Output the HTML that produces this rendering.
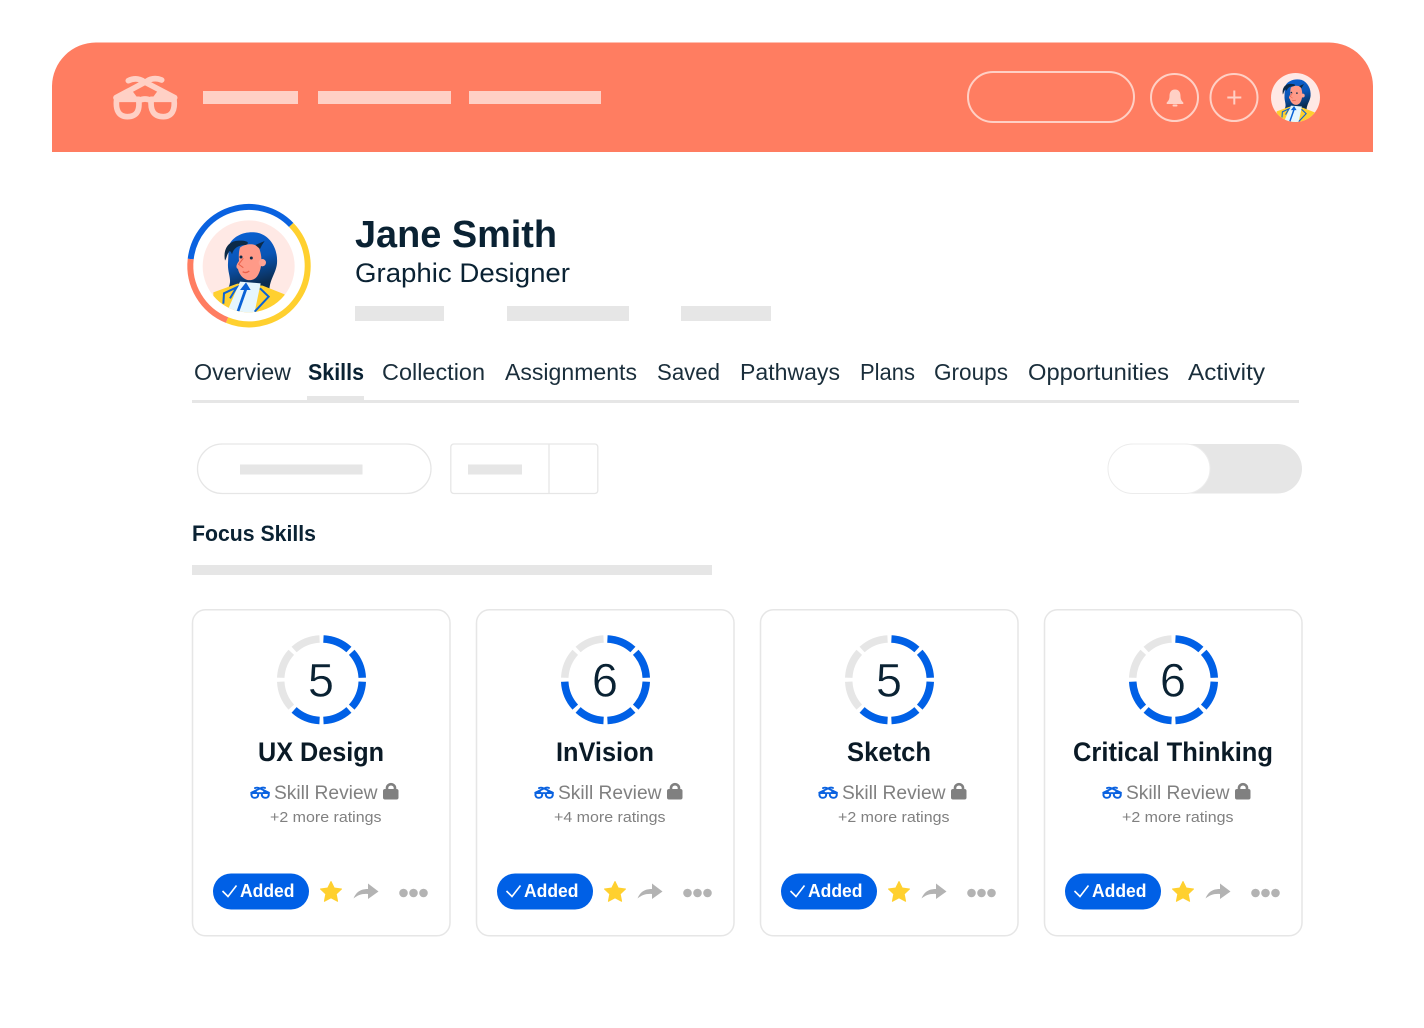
<!DOCTYPE html>
<html><head><meta charset="utf-8"><title>Profile</title>
<style>html,body{margin:0;padding:0;background:#fff}svg{display:block}text{font-family:"Liberation Sans",sans-serif}</style></head>
<body>
<svg width="1424" height="1028" viewBox="0 0 1424 1028" xmlns="http://www.w3.org/2000/svg">
<defs>
<linearGradient id="hg" x1="0" y1="0" x2="0.25" y2="1"><stop offset="0" stop-color="#0a62d6"/><stop offset=".55" stop-color="#0a55b5"/><stop offset="1" stop-color="#0b2c50"/></linearGradient>
<clipPath id="cc"><circle cx="206" cy="214" r="138"/></clipPath>
<g id="person">
<circle cx="206" cy="214" r="138" fill="#ffe9e5"/>
<g clip-path="url(#cc)">
<path d="M150 145C165 118 205 105 240 115C275 128 294 165 291 205C288 235 270 250 268 285L145 278C158 255 142 235 144 205C145 185 145 165 150 145Z" fill="url(#hg)"/>
<path d="M100 292L172 266L248 272L314 298L310 360L100 360Z" fill="#ffd02f"/>
<path d="M180 260L242 265L222 360L142 348Z" fill="#e6f6fd"/>
<path d="M198 262L180 285L192 285L170 348L178 350L201 285L212 285Z" fill="#0a62d6"/>
<path d="M130 326L132 295L170 277L150 310" fill="none" stroke="#0a62d6" stroke-width="6"/>
<path d="M224 350L266 305L240 280" fill="none" stroke="#0a62d6" stroke-width="6"/>
<path d="M180 158C195 146 222 144 236 156C242 170 245 185 244 200C244 215 240 230 234 240C226 256 205 260 192 250C182 244 176 232 174 222C166 218 169 208 177 198C176 184 176 170 180 158Z" fill="#ff9a88"/>
<circle cx="247" cy="203" r="11" fill="#ffa494"/>
<path d="M135 197C128 160 148 135 180 137C205 137 210 145 196 150C175 150 160 160 156 178C154 170 148 165 146 172C140 180 140 190 135 197Z" fill="#0c2a47"/>
<path d="M226 150L254 138L246 150L240 162Z" fill="#0c2a47"/>
<circle cx="183" cy="186" r="4.500" fill="#0c2a47"/><circle cx="214" cy="189" r="4.500" fill="#0c2a47"/>
<path d="M190 190L176 208L190 218" fill="none" stroke="#e8604a" stroke-width="3"/>
<path d="M188 230Q198 236 208 228" fill="none" stroke="#e8604a" stroke-width="4"/>
</g>
</g>
<g id="glasses" fill="none" stroke-linecap="round" stroke-linejoin="round">
<path d="M80 118H146C150 150 142 170 112 170C86 170 76 150 80 118Z"/>
<path d="M184 118H252C256 150 246 170 220 170C190 170 180 150 184 118Z"/>
<path d="M146 122Q165 112 184 122"/>
<path d="M78 113L168 65Q190 50 215 60"/>
<path d="M254 113L162 65Q140 50 115 62"/>
<path d="M78 113L125 90L146 118ZM254 113L205 90L184 118Z" fill="currentColor" stroke="none"/>
</g>
<g id="foot">
<rect x="192.500" y="609.800" width="257.500" height="326" rx="13" fill="#fff" stroke="#e6e6e6" stroke-width="1.500"/>
<circle cx="321.500" cy="679.700" r="40.800" fill="none" stroke="#e6e6e6" stroke-width="7.500" pathLength="360" stroke-dasharray="39.400 5.600" stroke-dashoffset="-2.800" transform="rotate(-90 321.500 679.700)"/>
<text x="274" y="799" font-size="19" fill="#808080" textLength="103.500" lengthAdjust="spacingAndGlyphs">Skill Review</text>
<use href="#glasses" transform="translate(243.500 782.500) scale(.1 .09)" stroke="#0a62e0" color="#0a62e0" stroke-width="20"/>
<path d="M387 790V788A4 3.800 0 0 1 395 788V790" fill="none" stroke="#808080" stroke-width="2.600"/>
<rect x="383" y="789" width="15.500" height="10.500" rx="2" fill="#808080"/>
<rect x="213" y="873.500" width="96" height="36" rx="18" fill="#0060e6"/>
<path d="M222.500 891L228 896.500L236.500 885.500" fill="none" stroke="#fff" stroke-width="1.600"/>
<text x="240" y="897" font-size="18" font-weight="700" fill="#fff" textLength="54.500" lengthAdjust="spacingAndGlyphs">Added</text>
<path d="M331 881.500L334.200 888L341.500 889L336.200 894L337.600 901.300L331 897.800L324.400 901.300L325.800 894L320.500 889L327.800 888Z" fill="#ffd02f" stroke="#ffd02f" stroke-linejoin="round"/>
<path d="M353.500 898.500C357 890 363 889 368 889V883.500L378.500 891.500L368 899V894C362 893.500 358 895 353.500 898.500Z" fill="#b3b3b3"/>
<circle cx="403.500" cy="893" r="4.300" fill="#b3b3b3"/><circle cx="413.500" cy="893" r="4.300" fill="#b3b3b3"/><circle cx="423.500" cy="893" r="4.300" fill="#b3b3b3"/>
</g>
</defs>

<path d="M52 152V86A44 44 0 0 1 96 42.500H1329A44 44 0 0 1 1373 86V152Z" fill="#ff7d61"/>
<use href="#glasses" transform="translate(90 60) scale(.3333)" stroke="#ffd0c5" color="#ffd0c5" stroke-width="17"/>
<g fill="#ffd0c5"><rect x="203" y="91" width="95" height="13"/><rect x="318" y="91" width="133" height="13"/><rect x="469" y="91" width="132" height="13"/></g>
<g fill="none" stroke="#ffd0c5" stroke-width="2"><rect x="968" y="72" width="166" height="50" rx="25"/><circle cx="1174.500" cy="97.500" r="23.500"/><circle cx="1234" cy="97.500" r="23.500"/></g>
<path d="M1175 89.500C1171 89.500 1169.500 92.500 1169.500 96C1169.500 99 1168.500 101 1166.700 102.500V104H1183.300V102.500C1181.500 101 1180.500 99 1180.500 96C1180.500 92.500 1179 89.500 1175 89.500Z" fill="#ffd0c5"/><rect x="1172.500" y="104.500" width="5" height="2" rx="1" fill="#ffd0c5"/>
<path d="M1234.300 90.500V104.500M1227.300 97.500H1241.300" stroke="#ffd0c5" stroke-width="2"/>
<use href="#person" transform="translate(1295.500 97.500) scale(.1775) translate(-206 -214)"/>

<g transform="translate(180 195) scale(.33333)">
<g fill="none" stroke-width="18">
<path d="M32.100 192.100A176 176 0 0 1 333.600 89.700" stroke="#0a62e0"/>
<path d="M333.600 89.700A176 176 0 0 1 141.100 375.200" stroke="#ffd02f"/>
<path d="M141.100 375.200A176 176 0 0 1 32.100 192.100" stroke="#ff7d61"/>
</g>
<use href="#person"/>
</g>

<text x="355" y="247" font-size="38" font-weight="700" fill="#0a2233" textLength="202" lengthAdjust="spacingAndGlyphs">Jane Smith</text>
<text x="355" y="282" font-size="27" fill="#0a2233" textLength="215" lengthAdjust="spacingAndGlyphs">Graphic Designer</text>
<g fill="#e6e6e6"><rect x="355" y="306" width="89" height="15"/><rect x="507" y="306" width="122" height="15"/><rect x="681" y="306" width="90" height="15"/></g>

<g font-size="23" fill="#1a2e3b">
<text x="194" y="380" textLength="97" lengthAdjust="spacingAndGlyphs">Overview</text>
<text x="308" y="380" font-weight="700" fill="#0a2233" textLength="56" lengthAdjust="spacingAndGlyphs">Skills</text>
<text x="382" y="380" textLength="103" lengthAdjust="spacingAndGlyphs">Collection</text>
<text x="505" y="380" textLength="132" lengthAdjust="spacingAndGlyphs">Assignments</text>
<text x="657" y="380" textLength="63" lengthAdjust="spacingAndGlyphs">Saved</text>
<text x="740" y="380" textLength="100" lengthAdjust="spacingAndGlyphs">Pathways</text>
<text x="860" y="380" textLength="55" lengthAdjust="spacingAndGlyphs">Plans</text>
<text x="934" y="380" textLength="74" lengthAdjust="spacingAndGlyphs">Groups</text>
<text x="1028" y="380" textLength="141" lengthAdjust="spacingAndGlyphs">Opportunities</text>
<text x="1188" y="380" textLength="77" lengthAdjust="spacingAndGlyphs">Activity</text>
</g>
<rect x="192" y="400" width="1107" height="3" fill="#e6e6e6"/>
<rect x="307" y="396" width="57" height="4" fill="#e6e6e6"/>

<rect x="197.500" y="444" width="233.500" height="49.500" rx="24.700" fill="#fff" stroke="#e6e6e6" stroke-width="1.300"/>
<rect x="240" y="464.500" width="122.500" height="10" fill="#e6e6e6"/>
<rect x="450.800" y="444" width="147" height="49.500" rx="3" fill="#fff" stroke="#e6e6e6" stroke-width="1.300"/>
<path d="M549 444V493.500" stroke="#e6e6e6" stroke-width="1.300"/>
<rect x="468" y="464.500" width="54" height="10" fill="#e6e6e6"/>
<rect x="1108" y="444" width="194" height="49.500" rx="24.700" fill="#e6e6e6"/>
<rect x="1108" y="444" width="102" height="49.500" rx="24.700" fill="#fff" stroke="#ececec" stroke-width="1"/>

<text x="192" y="541" font-size="22" font-weight="700" fill="#0a2233" textLength="124" lengthAdjust="spacingAndGlyphs">Focus Skills</text>
<rect x="192" y="565" width="520" height="10" fill="#e6e6e6"/>

<use href="#foot"/>
<circle cx="321.500" cy="679.700" r="40.800" fill="none" stroke="#0060e6" stroke-width="7.500" pathLength="360" stroke-dasharray="39.400 5.600 39.400 5.600 39.400 5.600 39.400 5.600 39.400 400" stroke-dashoffset="-2.800" transform="rotate(-90 321.500 679.700)"/>
<text x="321" y="696.500" font-size="47" fill="#0a2233" stroke="#fff" stroke-width=".5" text-anchor="middle">5</text>
<text x="321" y="761" font-size="27" font-weight="700" fill="#0a1a26" text-anchor="middle" textLength="126" lengthAdjust="spacingAndGlyphs">UX Design</text>
<text x="270" y="822" font-size="15" fill="#808080" textLength="111.500" lengthAdjust="spacingAndGlyphs">+2 more ratings</text>

<g transform="translate(284 0)"><use href="#foot"/>
<circle cx="321.500" cy="679.700" r="40.800" fill="none" stroke="#0060e6" stroke-width="7.500" pathLength="360" stroke-dasharray="39.400 5.600 39.400 5.600 39.400 5.600 39.400 5.600 39.400 5.600 39.400 400" stroke-dashoffset="-2.800" transform="rotate(-90 321.500 679.700)"/>
<text x="321" y="696.500" font-size="47" fill="#0a2233" stroke="#fff" stroke-width=".5" text-anchor="middle">6</text>
<text x="321" y="761" font-size="27" font-weight="700" fill="#0a1a26" text-anchor="middle" textLength="98" lengthAdjust="spacingAndGlyphs">InVision</text>
<text x="270" y="822" font-size="15" fill="#808080" textLength="111.500" lengthAdjust="spacingAndGlyphs">+4 more ratings</text></g>

<g transform="translate(568 0)"><use href="#foot"/>
<circle cx="321.500" cy="679.700" r="40.800" fill="none" stroke="#0060e6" stroke-width="7.500" pathLength="360" stroke-dasharray="39.400 5.600 39.400 5.600 39.400 5.600 39.400 5.600 39.400 400" stroke-dashoffset="-2.800" transform="rotate(-90 321.500 679.700)"/>
<text x="321" y="696.500" font-size="47" fill="#0a2233" stroke="#fff" stroke-width=".5" text-anchor="middle">5</text>
<text x="321" y="761" font-size="27" font-weight="700" fill="#0a1a26" text-anchor="middle" textLength="84" lengthAdjust="spacingAndGlyphs">Sketch</text>
<text x="270" y="822" font-size="15" fill="#808080" textLength="111.500" lengthAdjust="spacingAndGlyphs">+2 more ratings</text></g>

<g transform="translate(852 0)"><use href="#foot"/>
<circle cx="321.500" cy="679.700" r="40.800" fill="none" stroke="#0060e6" stroke-width="7.500" pathLength="360" stroke-dasharray="39.400 5.600 39.400 5.600 39.400 5.600 39.400 5.600 39.400 5.600 39.400 400" stroke-dashoffset="-2.800" transform="rotate(-90 321.500 679.700)"/>
<text x="321" y="696.500" font-size="47" fill="#0a2233" stroke="#fff" stroke-width=".5" text-anchor="middle">6</text>
<text x="321" y="761" font-size="27" font-weight="700" fill="#0a1a26" text-anchor="middle" textLength="200" lengthAdjust="spacingAndGlyphs">Critical Thinking</text>
<text x="270" y="822" font-size="15" fill="#808080" textLength="111.500" lengthAdjust="spacingAndGlyphs">+2 more ratings</text></g>
</svg>
</body></html>
